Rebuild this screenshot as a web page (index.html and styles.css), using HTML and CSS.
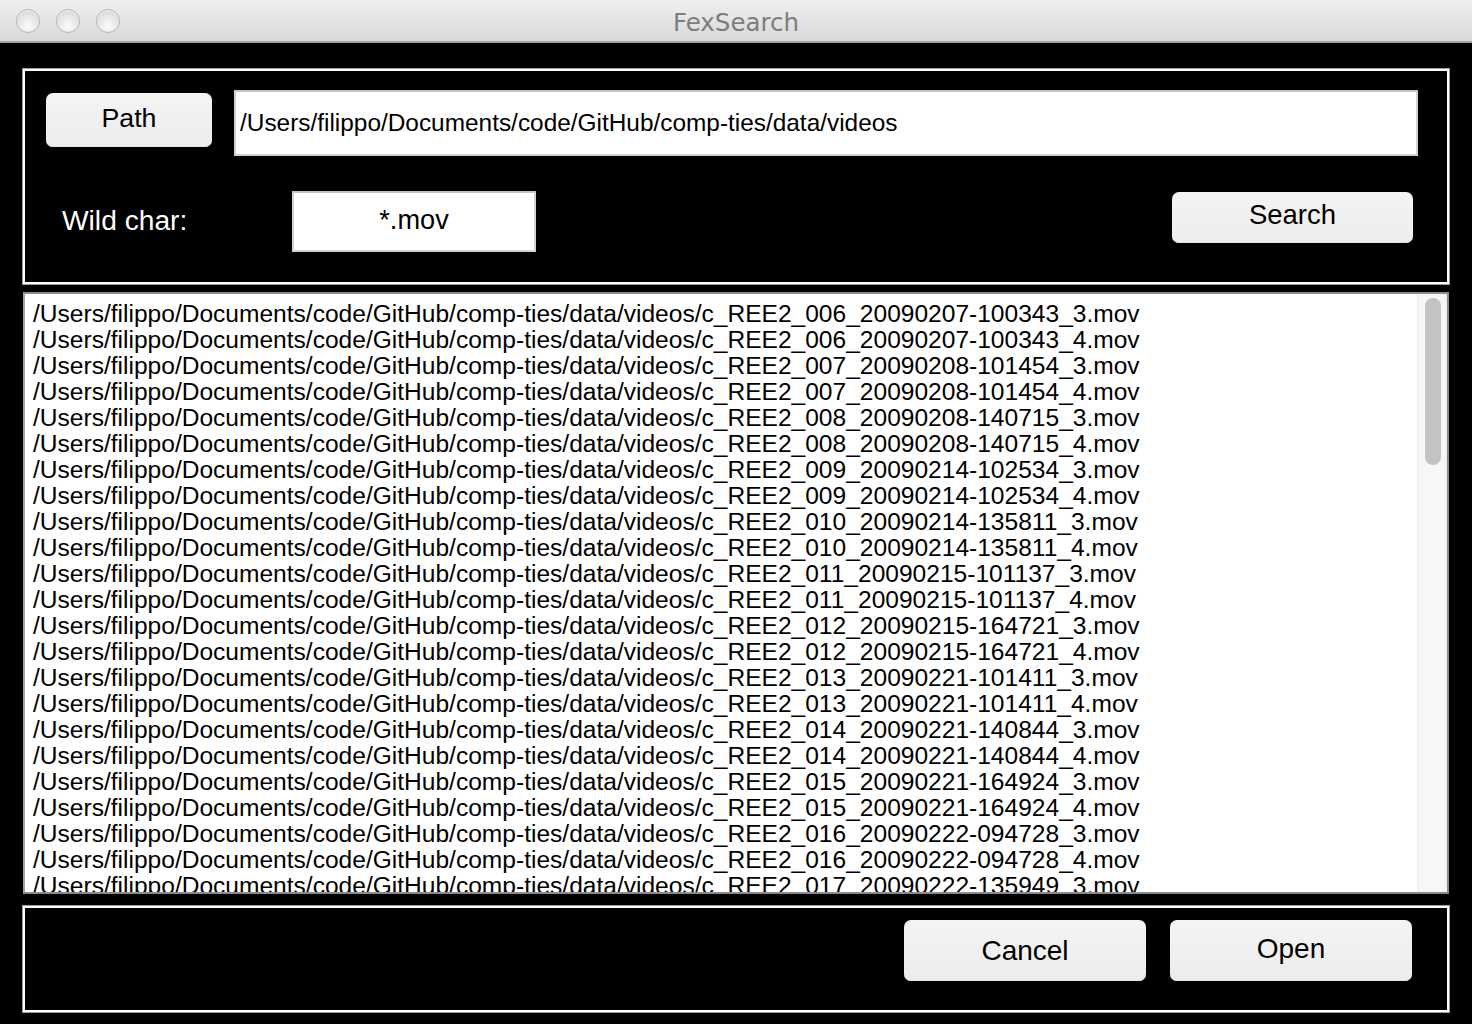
FILE: index.html
```html
<!DOCTYPE html>
<html>
<head>
<meta charset="utf-8">
<title>FexSearch</title>
<link rel="stylesheet" href="styles.css">
</head>
<body>
<div class="window">
  <div class="titlebar">
    <div class="lights">
      <span class="light"></span>
      <span class="light"></span>
      <span class="light"></span>
    </div>
    <div class="title">FexSearch</div>
  </div>
  <div class="content">
    <div class="panel top-panel">
      <div class="row row-path">
        <div class="btn btn-path">Path</div>
        <div class="field field-path">/Users/filippo/Documents/code/GitHub/comp-ties/data/videos</div>
      </div>
      <div class="row row-wild">
        <div class="label">Wild char:</div>
        <div class="field field-wild">*.mov</div>
        <div class="spacer"></div>
        <div class="btn btn-search">Search</div>
      </div>
    </div>
    <div class="list">
      <div class="list-body">
        <div class="item">/Users/filippo/Documents/code/GitHub/comp-ties/data/videos/c_REE2_006_20090207-100343_3.mov</div>
        <div class="item">/Users/filippo/Documents/code/GitHub/comp-ties/data/videos/c_REE2_006_20090207-100343_4.mov</div>
        <div class="item">/Users/filippo/Documents/code/GitHub/comp-ties/data/videos/c_REE2_007_20090208-101454_3.mov</div>
        <div class="item">/Users/filippo/Documents/code/GitHub/comp-ties/data/videos/c_REE2_007_20090208-101454_4.mov</div>
        <div class="item">/Users/filippo/Documents/code/GitHub/comp-ties/data/videos/c_REE2_008_20090208-140715_3.mov</div>
        <div class="item">/Users/filippo/Documents/code/GitHub/comp-ties/data/videos/c_REE2_008_20090208-140715_4.mov</div>
        <div class="item">/Users/filippo/Documents/code/GitHub/comp-ties/data/videos/c_REE2_009_20090214-102534_3.mov</div>
        <div class="item">/Users/filippo/Documents/code/GitHub/comp-ties/data/videos/c_REE2_009_20090214-102534_4.mov</div>
        <div class="item">/Users/filippo/Documents/code/GitHub/comp-ties/data/videos/c_REE2_010_20090214-135811_3.mov</div>
        <div class="item">/Users/filippo/Documents/code/GitHub/comp-ties/data/videos/c_REE2_010_20090214-135811_4.mov</div>
        <div class="item">/Users/filippo/Documents/code/GitHub/comp-ties/data/videos/c_REE2_011_20090215-101137_3.mov</div>
        <div class="item">/Users/filippo/Documents/code/GitHub/comp-ties/data/videos/c_REE2_011_20090215-101137_4.mov</div>
        <div class="item">/Users/filippo/Documents/code/GitHub/comp-ties/data/videos/c_REE2_012_20090215-164721_3.mov</div>
        <div class="item">/Users/filippo/Documents/code/GitHub/comp-ties/data/videos/c_REE2_012_20090215-164721_4.mov</div>
        <div class="item">/Users/filippo/Documents/code/GitHub/comp-ties/data/videos/c_REE2_013_20090221-101411_3.mov</div>
        <div class="item">/Users/filippo/Documents/code/GitHub/comp-ties/data/videos/c_REE2_013_20090221-101411_4.mov</div>
        <div class="item">/Users/filippo/Documents/code/GitHub/comp-ties/data/videos/c_REE2_014_20090221-140844_3.mov</div>
        <div class="item">/Users/filippo/Documents/code/GitHub/comp-ties/data/videos/c_REE2_014_20090221-140844_4.mov</div>
        <div class="item">/Users/filippo/Documents/code/GitHub/comp-ties/data/videos/c_REE2_015_20090221-164924_3.mov</div>
        <div class="item">/Users/filippo/Documents/code/GitHub/comp-ties/data/videos/c_REE2_015_20090221-164924_4.mov</div>
        <div class="item">/Users/filippo/Documents/code/GitHub/comp-ties/data/videos/c_REE2_016_20090222-094728_3.mov</div>
        <div class="item">/Users/filippo/Documents/code/GitHub/comp-ties/data/videos/c_REE2_016_20090222-094728_4.mov</div>
        <div class="item">/Users/filippo/Documents/code/GitHub/comp-ties/data/videos/c_REE2_017_20090222-135949_3.mov</div>
      </div>
      <div class="scrollbar">
        <div class="thumb"></div>
      </div>
    </div>
    <div class="panel bottom-panel">
      <div class="btn btn-cancel">Cancel</div>
      <div class="btn btn-open">Open</div>
    </div>
  </div>
</div>
</body>
</html>
```

FILE: styles.css
```css
* { box-sizing: border-box; }

html, body {
  margin: 0;
  padding: 0;
  background: #000;
}

body {
  width: 1472px;
  height: 1024px;
  overflow: hidden;
  font-family: "Liberation Sans", Arial, sans-serif;
  color: #000;
}

.window {
  width: 1472px;
  height: 1024px;
  background: #000;
  display: flex;
  flex-direction: column;
}

.titlebar {
  height: 43px;
  flex: none;
  background: linear-gradient(#efefef, #d9d9d9);
  border-bottom: 2px solid #a6a6a6;
  display: flex;
  align-items: center;
  position: relative;
}

.lights {
  display: flex;
  gap: 16px;
  padding-left: 16px;
  padding-top: 1px;
}

.light {
  width: 24px;
  height: 24px;
  border-radius: 50%;
  border: 1px solid #b4b4b4;
  background: radial-gradient(circle at 50% 75%, #fbfbfb 0%, #e9e9e9 45%, #d2d2d2 100%);
  box-shadow: inset 0 1px 1px rgba(255,255,255,0.8);
}

.title {
  position: absolute;
  left: 0;
  right: 0;
  top: 0;
  bottom: 0;
  display: flex;
  align-items: center;
  justify-content: center;
  font-family: "DejaVu Sans", "Liberation Sans", sans-serif;
  font-size: 24.5px;
  color: #7d7d7d;
  padding-top: 3px;
}

.content {
  padding: 26px 23px 0 23px;
  display: flex;
  flex-direction: column;
}

.panel {
  border: 2px solid #ffffff;
  box-shadow: 0 0 0 1px #9c9c9c;
  background: #000;
}

.top-panel {
  height: 215px;
  padding: 19px 29px 30px 21px;
  display: flex;
  flex-direction: column;
}

.row {
  display: flex;
}

.row-path {
  height: 66px;
  align-items: flex-start;
}

.btn {
  background: linear-gradient(#f4f4f4, #ececec);
  border-radius: 7px;
  box-shadow: inset 0 -1px 0 #e2e2e2;
  display: flex;
  align-items: center;
  justify-content: center;
  color: #000;
}

.btn-path {
  width: 166px;
  height: 54px;
  margin-top: 3px;
  font-size: 26.7px;
  padding-bottom: 3px;
}

.field {
  background: #fff;
  border: 2px solid #d2d2d2;
  border-top-color: #c4c4c4;
  display: flex;
  align-items: center;
}

.field-path {
  flex: 1;
  height: 66px;
  margin-left: 22px;
  padding-left: 4px;
  font-size: 24.4px;
}

.row-wild {
  margin-top: 35px;
  height: 61px;
  align-items: flex-start;
}

.label {
  width: 246px;
  padding-left: 16px;
  height: 61px;
  display: flex;
  align-items: center;
  color: #fff;
  font-size: 28.2px;
  padding-bottom: 2px;
}

.field-wild {
  width: 244px;
  height: 61px;
  justify-content: center;
  font-size: 27.2px;
  padding-bottom: 4px;
}

.spacer { flex: 1; }

.btn-search {
  width: 241px;
  height: 51px;
  margin-top: 1px;
  margin-right: 5px;
  font-size: 27.5px;
  padding-bottom: 5px;
}

.list {
  margin-top: 8px;
  height: 602px;
  background: #fff;
  border: 2px solid #8a8a8a;
  border-left-color: #a0a0a0;
  display: flex;
  overflow: hidden;
}

.list-body {
  flex: 1;
  overflow: hidden;
  padding: 7px 0 0 8px;
  font-size: 24.55px;
  line-height: 26px;
  white-space: nowrap;
}

.item {
  height: 26px;
}

.scrollbar {
  width: 30px;
  flex: none;
  background: linear-gradient(90deg, #ececec 0px, #f7f7f7 3px, #f7f7f7 26px, #f0f0f0 30px);
  padding: 4px 0 0 8px;
}

.thumb {
  width: 16px;
  height: 167px;
  border-radius: 8px;
  background: #c3c3c3;
}

.bottom-panel {
  margin-top: 12px;
  height: 106px;
  padding: 12px 35px 0 0;
  display: flex;
  justify-content: flex-end;
  align-items: flex-start;
  gap: 24px;
}

.btn-cancel,
.btn-open {
  width: 242px;
  height: 61px;
  font-size: 28px;
}

.btn-open {
  padding-bottom: 4px;
}
```
